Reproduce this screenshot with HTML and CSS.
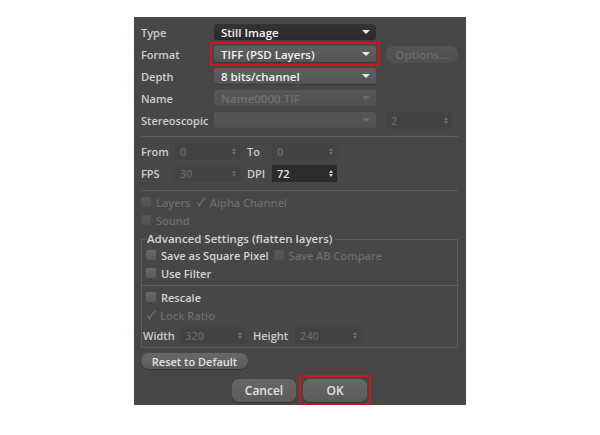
FILE: index.html
```html
<!DOCTYPE html>
<html>
<head>
<meta charset="utf-8">
<link rel="stylesheet" href="styles.css">
</head>
<body>
<div class="dialog">
  <div class="row">
    <span class="label">Type</span>
    <div class="drop dark"><span>Still Image</span><i class="arrow"></i></div>
  </div>
  <div class="row">
    <span class="label">Format</span>
    <div class="mark"><div class="drop"><span>TIFF (PSD Layers)</span><i class="arrow"></i></div></div>
    <div class="pill">Options...</div>
  </div>
  <div class="row">
    <span class="label">Depth</span>
    <div class="drop"><span>8 bits/channel</span><i class="arrow"></i></div>
  </div>
  <div class="row">
    <span class="label">Name</span>
    <div class="drop off"><span>Name0000.TIF</span><i class="arrow"></i></div>
  </div>
  <div class="row">
    <span class="label">Stereoscopic</span>
    <div class="drop off"><span></span><i class="arrow"></i></div>
    <div class="num off wide"><span>2</span><i class="spin"></i></div>
  </div>
  <div class="sep"></div>
  <div class="row">
    <span class="label short">From</span>
    <div class="num off"><span>0</span><i class="spin"></i></div>
    <span class="label mid">To</span>
    <div class="num off"><span>0</span><i class="spin"></i></div>
  </div>
  <div class="row">
    <span class="label short">FPS</span>
    <div class="num off"><span>30</span><i class="spin"></i></div>
    <span class="label mid">DPI</span>
    <div class="num on"><span>72</span><i class="spin"></i></div>
  </div>
  <div class="sep s2"></div>
  <div class="crow">
    <i class="cb off"></i><span class="dim">Layers</span>
    <svg class="chk" viewBox="0 0 10 10"><path d="M1.5 5.5 Q2.8 6.8 3.4 9 Q5.5 4 9.5 0.8" fill="none" stroke="#6a6a6a" stroke-width="1.3"/></svg><span class="dim">Alpha Channel</span>
  </div>
  <div class="crow">
    <i class="cb off"></i><span class="dim">Sound</span>
  </div>
  <fieldset class="group">
    <legend>Advanced Settings (flatten layers)</legend>
    <div class="crow in">
      <i class="cb"></i><span class="txt">Save as Square Pixel</span>
      <i class="cb off"></i><span class="dim">Save AB Compare</span>
    </div>
    <div class="crow in">
      <i class="cb"></i><span class="txt">Use Filter</span>
    </div>
    <div class="sep s3"></div>
    <div class="crow in">
      <i class="cb"></i><span class="txt">Rescale</span>
    </div>
    <div class="crow in">
      <svg class="chk first" viewBox="0 0 10 10"><path d="M1.5 5.5 Q2.8 6.8 3.4 9 Q5.5 4 9.5 0.8" fill="none" stroke="#6e6e6e" stroke-width="1.3"/></svg><span class="dim">Lock Ratio</span>
    </div>
    <div class="row wrow">
      <span class="label wl">Width</span>
      <div class="num off"><span>320</span><i class="spin"></i></div>
      <span class="label hl2">Height</span>
      <div class="num off"><span>240</span><i class="spin"></i></div>
    </div>
  </fieldset>
  <div class="reset-row"><div class="btn small">Reset to Default</div></div>
  <div class="btn-row">
    <div class="btn big">Cancel</div>
    <div class="mark"><div class="btn big">OK</div></div>
  </div>
</div>
</body>
</html>
```
FILE: styles.css
```css
html, body {
  margin: 0;
  padding: 0;
  background: #ffffff;
}
body {
  font-family: "Open Sans", "DejaVu Sans", sans-serif;
  font-size: 11px;
  font-weight: 600;
  color: #cdcdcd;
}
.dialog {
  width: 332px;
  height: 388px;
  margin: 17px 0 0 134px;
  background: #474747;
  box-sizing: border-box;
  padding: 4px 8px 0 7px;
}
.row {
  display: flex;
  align-items: center;
  height: 22px;
}
.label {
  width: 73px;
  flex: none;
  white-space: nowrap;
}
.label.short { width: 34px; }
.label.mid { width: 25px; margin-left: 7px; }
.mark {
  display: flex;
  outline: 2px solid #d3141e;
  outline-offset: 2px;
}
.drop {
  position: relative;
  width: 162px;
  height: 16px;
  border-radius: 3px;
  background: linear-gradient(#5f5f5f, #545454);
  box-shadow: 0 1px 0 #3a3a3a;
  color: #f2f2f2;
  display: flex;
  align-items: center;
  padding-left: 7px;
  box-sizing: border-box;
  font-size: 11.5px;
}
.drop.dark {
  background: linear-gradient(#333333, #2a2a2a);
  box-shadow: 0 1px 0 #3d3d3d;
}
.drop.off {
  background: linear-gradient(#565656, #515151);
  color: #6f6f6f;
  box-shadow: none;
}
.arrow {
  position: absolute;
  right: 6px;
  top: 6px;
  width: 0;
  height: 0;
  border-left: 4px solid transparent;
  border-right: 4px solid transparent;
  border-top: 4px solid #e8e8e8;
}
.drop.off .arrow { border-top-color: #6a6a6a; }
.pill {
  margin-left: 10px;
  width: 72px;
  height: 17px;
  border-radius: 8px;
  background: linear-gradient(#555555, #4f4f4f);
  color: #6c6c6c;
  display: flex;
  align-items: center;
  justify-content: center;
  font-size: 11.5px;
}
.num {
  position: relative;
  width: 65px;
  height: 17px;
  background: #424242;
  color: #676767;
  display: flex;
  align-items: center;
  padding-left: 5px;
  box-sizing: border-box;
  flex: none;
}
.num.wide { width: 66px; margin-left: 10px; }
.num.on { background: #2c2c2c; color: #ececec; }
.spin {
  position: absolute;
  right: 4px;
  top: 5px;
  width: 0;
  height: 0;
  border-left: 2px solid transparent;
  border-right: 2px solid transparent;
  border-bottom: 3px solid #6a6a6a;
}
.spin::after {
  content: "";
  position: absolute;
  left: -2px;
  top: 4px;
  border-left: 2px solid transparent;
  border-right: 2px solid transparent;
  border-top: 3px solid #6a6a6a;
}
.num.on .spin { border-bottom-color: #d0d0d0; }
.num.on .spin::after { border-top-color: #d0d0d0; }
.sep {
  height: 1px;
  background: #5e5e5e;
  margin: 5px 0 3px 0;
}
.sep.s2 { margin: 6px 0 2px 0; }
.sep.s3 { margin: 3px -2px 2px -4px; }
.crow {
  display: flex;
  align-items: center;
  height: 18px;
  white-space: nowrap;
}
.crow.in { padding-left: 1px; }
.cb {
  width: 10px;
  height: 10px;
  border-radius: 2px;
  background: linear-gradient(#6a6a6a, #5a5a5a);
  margin-right: 5px;
  flex: none;
}
.cb.off {
  background: linear-gradient(#575757, #515151);
}
.dim { color: #6c6c6c; margin-right: 5px; }
.txt { color: #d6d6d6; margin-right: 5px; }
.chk {
  width: 10px;
  height: 10px;
  margin-right: 4px;
  flex: none;
}
.group {
  margin: 3px 0 0 0;
  padding: 0 0 1px 3px;
  border: 1px solid #5c5c5c;
  width: 317px;
  box-sizing: border-box;
}
.group legend {
  padding: 0 2px;
  color: #d4d4d4;
  font-size: 11.5px;
  line-height: 14px;
}
.wrow { height: 21px; margin-top: 1px; margin-left: -2px; }
.label.wl { width: 37px; }
.label.hl2 { width: 42px; margin-left: 7px; }
.wrow .num { width: 66px; }
.reset-row {
  margin-top: 5px;
  display: flex;
}
.btn {
  display: flex;
  align-items: center;
  justify-content: center;
  background: linear-gradient(#686868, #5a5a5a);
  box-shadow: 0 1px 1px #333333;
  color: #e2e2e2;
  box-sizing: border-box;
}
.btn.small {
  width: 107px;
  height: 16px;
  border-radius: 8px;
}
.btn-row {
  display: flex;
  justify-content: flex-start;
  gap: 7px;
  margin-top: 10px;
  padding-left: 91px;
}
.btn.big {
  width: 64px;
  height: 23px;
  border-radius: 7px;
  font-size: 12px;
}
```
